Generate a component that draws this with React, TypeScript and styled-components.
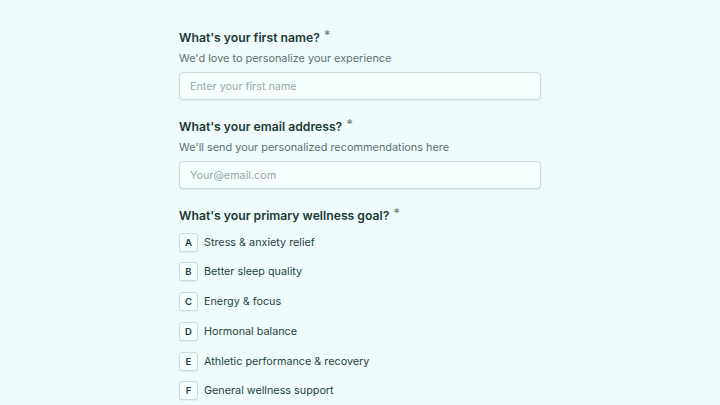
import React from "react";
import styled, { createGlobalStyle } from "styled-components";

const Global = createGlobalStyle`
  html, body { margin: 0; padding: 0; background: #effcfb; }
  body { font-family: Inter, "Noto Sans", sans-serif; -webkit-font-smoothing: antialiased; }
  * { box-sizing: border-box; }
`;

const Page = styled.div`
  width: 720px;
  height: 405px;
  overflow: hidden;
  background: #effcfb;
  display: flex;
  justify-content: center;
`;

const Form = styled.div`
  width: 362px;
  padding-top: 28px;
  display: flex;
  flex-direction: column;
  gap: 17px;
`;

const Field = styled.div`
  display: flex;
  flex-direction: column;
`;

const Title = styled.div`
  font-size: 12.2px;
  line-height: 20px;
  font-weight: 600;
  color: #1b3835;
  display: flex;
  align-items: flex-start;
`;

const Star = styled.span`
  font-size: 13px;
  line-height: 13px;
  color: #6f8784;
  margin-left: 4px;
  margin-top: 1px;
  font-weight: 500;
`;

const Sub = styled.div`
  font-size: 10.9px;
  line-height: 18px;
  color: #5b7470;
  margin-top: 1px;
`;

const Input = styled.input`
  margin-top: 5px;
  width: 100%;
  height: 28px;
  border: 1px solid #cddbd9;
  border-radius: 4px;
  background: #f4fefd;
  padding: 0 10px;
  font-family: inherit;
  font-size: 10.8px;
  color: #1e3b38;
  box-shadow: 0 1px 2px rgba(20, 60, 55, 0.08);
  outline: none;
  &::placeholder { color: #97aaa7; }
`;

const Options = styled.div`
  margin-top: 6px;
  display: flex;
  flex-direction: column;
  gap: 9.8px;
`;

const Option = styled.div`
  display: flex;
  align-items: center;
  height: 20px;
  gap: 6px;
`;

const Badge = styled.span`
  width: 19px;
  height: 19px;
  border: 1px solid #cddbd9;
  border-radius: 3px;
  background: #f4fefd;
  display: flex;
  align-items: center;
  justify-content: center;
  font-size: 9.5px;
  font-weight: 600;
  color: #1e3b38;
  box-shadow: 0 1px 1px rgba(20, 60, 55, 0.06);
`;

const Label = styled.span`
  font-size: 10.8px;
  color: #26433f;
`;

const goals = [
  ["A", "Stress & anxiety relief"],
  ["B", "Better sleep quality"],
  ["C", "Energy & focus"],
  ["D", "Hormonal balance"],
  ["E", "Athletic performance & recovery"],
  ["F", "General wellness support"],
];

export default function App() {
  return (
    <Page>
      <Global />
      <Form>
        <Field>
          <Title>What's your first name?<Star>*</Star></Title>
          <Sub>We'd love to personalize your experience</Sub>
          <Input placeholder="Enter your first name" />
        </Field>
        <Field>
          <Title>What's your email address?<Star>*</Star></Title>
          <Sub>We'll send your personalized recommendations here</Sub>
          <Input placeholder="Your@email.com" />
        </Field>
        <Field>
          <Title>What's your primary wellness goal?<Star>*</Star></Title>
          <Options>
            {goals.map(([k, t]) => (
              <Option key={k}>
                <Badge>{k}</Badge>
                <Label>{t}</Label>
              </Option>
            ))}
          </Options>
        </Field>
      </Form>
    </Page>
  );
}
